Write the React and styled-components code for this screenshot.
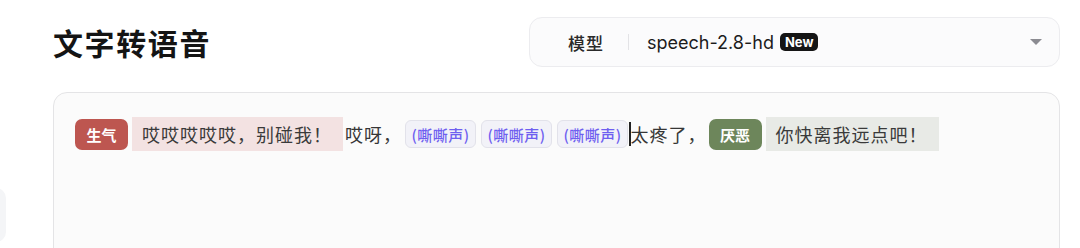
import React from 'react';
import styled, { createGlobalStyle } from 'styled-components';

const GlobalStyle = createGlobalStyle`
  html, body {
    margin: 0;
    padding: 0;
    background: #ffffff;
    font-family: Inter, "Noto Sans CJK SC", sans-serif;
    overflow: hidden;
  }
`;

const Page = styled.div`
  display: flex;
  width: 1080px;
  height: 248px;
  overflow: hidden;
`;

const LeftRail = styled.div`
  width: 6px;
  flex-shrink: 0;
  padding-top: 188px;
  overflow: hidden;
`;

const RailStub = styled.div`
  width: 40px;
  height: 54px;
  margin-left: -34px;
  border-radius: 10px;
  background: #f4f5f7;
`;

const Main = styled.div`
  margin-left: 47px;
  width: 1007px;
  padding-top: 17px;
`;

const Header = styled.div`
  display: flex;
  align-items: center;
  justify-content: space-between;
  height: 50px;
`;

const Title = styled.h1`
  margin: 0;
  font-family: "Noto Sans CJK SC", sans-serif;
  font-size: 30px;
  font-weight: 700;
  letter-spacing: 1.6px;
  color: #141414;
`;

const ModelSelect = styled.div`
  box-sizing: border-box;
  width: 531px;
  height: 50px;
  display: flex;
  align-items: center;
  padding: 0 17px 0 38px;
  border: 1px solid #ececef;
  border-radius: 13px;
  background: #fbfbfc;
`;

const ModelLabel = styled.span`
  font-family: "Noto Sans CJK SC", sans-serif;
  font-size: 17px;
  font-weight: 500;
  letter-spacing: 1px;
  color: #2a2a2a;
`;

const Divider = styled.span`
  width: 1px;
  height: 16px;
  margin: 0 18px 0 24px;
  background: #e3e3e6;
`;

const ModelName = styled.span`
  font-family: Inter, sans-serif;
  font-size: 18px;
  color: #1c1c1c;
`;

const NewBadge = styled.span`
  margin-left: 6px;
  padding: 0 5px;
  height: 18px;
  line-height: 18px;
  border-radius: 5px;
  background: #151515;
  color: #fff;
  font-family: Inter, sans-serif;
  font-size: 13px;
  font-weight: 700;
`;

const Caret = styled.span`
  margin-left: auto;
  width: 0;
  height: 0;
  border-left: 6px solid transparent;
  border-right: 6px solid transparent;
  border-top: 6px solid #8b8b91;
`;

const Editor = styled.div`
  box-sizing: border-box;
  margin-top: 25px;
  height: 200px;
  padding: 24px 21px;
  border: 1px solid #e4e4e6;
  border-radius: 14px;
  background: #fbfbfb;
`;

const Line = styled.div`
  display: flex;
  align-items: center;
  height: 34px;
  font-family: "Noto Sans CJK SC", sans-serif;
  font-size: 18px;
  letter-spacing: 1px;
  color: #363636;
`;

const EmotionTag = styled.span`
  display: inline-flex;
  align-items: center;
  justify-content: center;
  width: 53px;
  height: 31px;
  border-radius: 7px;
  background: ${(p) => p.$color};
  color: #fff;
  font-size: 15px;
  font-weight: 700;
  letter-spacing: 0;
  margin-right: 4px;
`;

const Segment = styled.span`
  display: inline-flex;
  align-items: center;
  height: 34px;
  padding: 0 11px 0 10px;
  background: ${(p) => p.$bg};
  color: #3a3a3a;
`;

const Plain = styled.span`
  margin-left: ${(p) => p.$ml || 0}px;
  margin-right: ${(p) => p.$mr || 0}px;
  white-space: nowrap;
`;

const SoundChip = styled.span`
  box-sizing: border-box;
  display: inline-flex;
  align-items: center;
  justify-content: center;
  width: 71px;
  height: 28px;
  margin-right: 5px;
  border: 1px solid #e2e2ea;
  border-radius: 6px;
  background: #f2f2f8;
  color: #6e5ef0;
  font-size: 15px;
  font-weight: 500;
  letter-spacing: 0.5px;
`;

const TextCursor = styled.span`
  width: 1.5px;
  height: 24px;
  margin-left: -4px;
  background: #222;
`;

export default function App() {
  return (
    <>
      <GlobalStyle />
      <Page>
        <LeftRail>
          <RailStub />
        </LeftRail>
        <Main>
          <Header>
            <Title>文字转语音</Title>
            <ModelSelect>
              <ModelLabel>模型</ModelLabel>
              <Divider />
              <ModelName>speech-2.8-hd</ModelName>
              <NewBadge>New</NewBadge>
              <Caret />
            </ModelSelect>
          </Header>
          <Editor>
            <Line>
              <EmotionTag $color="#bd5650">生气</EmotionTag>
              <Segment $bg="#f3e2e2">哎哎哎哎哎，别碰我！</Segment>
              <Plain $ml={2} $mr={3}>哎呀，</Plain>
              <SoundChip>(嘶嘶声)</SoundChip>
              <SoundChip>(嘶嘶声)</SoundChip>
              <SoundChip>(嘶嘶声)</SoundChip>
              <TextCursor />
              <Plain $mr={2}>太疼了，</Plain>
              <EmotionTag $color="#6d865b">厌恶</EmotionTag>
              <Segment $bg="#e8eae6">你快离我远点吧！</Segment>
            </Line>
          </Editor>
        </Main>
      </Page>
    </>
  );
}
